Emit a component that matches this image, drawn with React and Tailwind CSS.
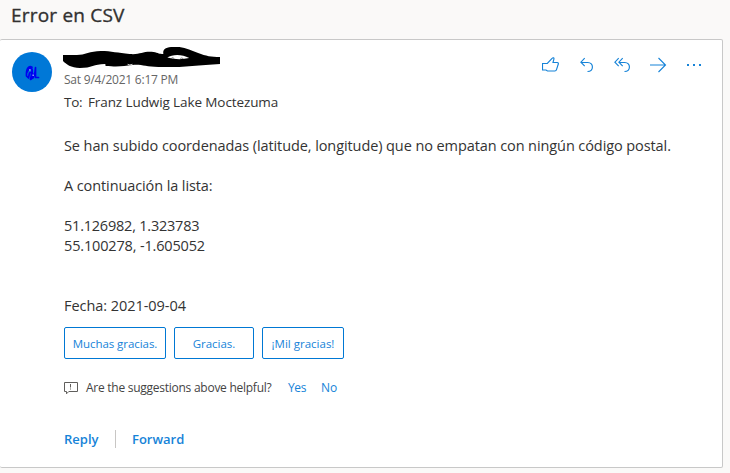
import React from "react";

const stroke = {
  fill: "none",
  stroke: "#1683d8",
  strokeWidth: 1,
};

function ThumbUp() {
  return (
    <svg className="h-4 w-[17px]" viewBox="0 0 17 16" {...stroke} strokeWidth="1.15" aria-label="Like">
      <path d="M.5 6.5H5.3L10.3 1.2C11 .3 12.3 .9 11.9 2.2L11 5.5H15.2Q16.6 5.5 16.3 7L14.5 12.7Q14.2 14 12.8 14H5.5L4 13H.5Z" />
    </svg>
  );
}

function ReplyIcon() {
  return (
    <svg className="h-4 w-3.5" viewBox="0 0 14 16" {...stroke} strokeWidth="1.15" aria-label="Reply">
      <path d="M4.7 1.2 .9 5.2 4.7 9.2M1 5.5H7.8C14 5.5 14 14.5 7.5 14.5" />
    </svg>
  );
}

function ReplyAllIcon() {
  return (
    <svg className="h-4 w-[17px]" viewBox="0 0 17 16" {...stroke} strokeWidth="1.15" aria-label="Reply all">
      <path d="M4.7 1.2 .9 5.2 4.7 9.2M8.7 1.2 4.9 5.2 8.7 9.2M5 5.5H10.8C17 5.5 17 14.5 10.5 14.5" />
    </svg>
  );
}

function ForwardIcon() {
  return (
    <svg className="h-4 w-[17px]" viewBox="0 0 17 16" {...stroke} strokeWidth="1.1" aria-label="Forward">
      <path d="M0 8H15.5M8.5 1 15.5 8 8.5 15" />
    </svg>
  );
}

function MoreIcon() {
  return (
    <svg className="h-4 w-4" viewBox="0 0 16 16" fill="#1683d8" aria-label="More">
      <path d="M1 7H3V9H1ZM7 7H9V9H7ZM13 7H15V9H13Z" />
    </svg>
  );
}

function FeedbackIcon() {
  return (
    <svg className="h-3.5 w-3.5" viewBox="0 0 14 14" fill="none" stroke="#605e5c">
      <path d="M.5 1.5H13.5V10.5H4.8L2.5 12.8V10.5H.5Z" />
      <path d="M6.5 3V6.5M6.5 7.5V8.5" />
    </svg>
  );
}

function Avatar() {
  return (
    <svg className="h-10 w-10 shrink-0" viewBox="0 0 40 40">
      <circle cx="20" cy="20" r="20" fill="#0078d7" />
      <g fill="none" stroke="#0000f0" strokeWidth="1.7" strokeLinecap="round" strokeLinejoin="round">
        <path d="M20 15.3C17 13.5 14 16 14.5 24L16.5 26 17.5 21 20 20 18.5 27.5 20.5 26 20 17M20.5 22 21 26 23 20 23.5 15.5 23.5 25.5 26.5 25.5" />
        <path d="M15 20 18 15 20 18" />
      </g>
      <path d="M17.2 17.2H18.5V18.4H17.2ZM20.5 22.5H21.8V24H20.5Z" fill="#9dbfff" />
    </svg>
  );
}

function Scribble() {
  return (
    <svg className="block h-[22px] w-[157px]" viewBox="0 0 158 22" preserveAspectRatio="none">
      <path
        fill="#000"
        fillRule="evenodd"
        d="M0 8H14C22 8 27 4 38 4C49 4 55 6 67 7C78 8 80 4 91 5C96 6 97 7 101 7C100 2 104 0 111 0C121-1 128 3 136 6C144 9 149 10 158 10V17C143 18 130 19 117 20H96C83 20 79 17 70 18C61 19 57 20 43 19C42 18 44 18 42 17C31 17 29 21 17 21C8 21 3 17 0 14ZM105 10.5C110 7 120 7 127 11Q116 13.5 105 10.5Z"
      />
      <path d="M109 11.3Q110 10 112 11.5M118 11.5Q119 10.5 121 11.5" fill="none" stroke="#333" strokeWidth=".6" />
      <path d="M65 17.3Q67 18.5 70 17.3" fill="none" stroke="#fff" strokeWidth=".8" />
    </svg>
  );
}

export default function App() {
  return (
    <main className="h-[473px] w-[730px] overflow-hidden bg-[#faf9f8] font-['Open_Sans','Noto_Sans',sans-serif] text-[#333]">
      <h1 className="h-[39px] pl-[11px] text-[19px] leading-[31px] font-medium whitespace-nowrap text-[#323130] [-webkit-text-stroke:0.35px_#323130]">
        <span className="tracking-[0.2px]">Error en CSV</span>
      </h1>
      <article className="flex h-[429px] w-[723px] rounded-[2px] border border-l-0 border-[#c8c8c8] bg-white pt-3 pl-3">
        <Avatar />
        <div className="ml-3 flex-1 whitespace-nowrap">
          <header className="flex justify-between">
            <div className="-mt-[5px] -ml-px">
              <Scribble />
              <div className="ml-px h-[22px] text-[12px] leading-[22px] text-[#666]">
                <span className="tracking-[-0.22px]">Sat 9/4/2021 6:17 PM</span>
              </div>
              <div className="ml-px flex h-6 gap-[6px] text-[13.5px] leading-[22px]">
                <span className="w-[18px] tracking-[-0.3px]">To:</span>
                <span className="tracking-[-0.1px]">Franz Ludwig Lake Moctezuma</span>
              </div>
            </div>
            <div className="mt-[5px] mr-[20px] flex h-4 items-center">
              <ThumbUp />
              <span className="ml-[21px] flex"><ReplyIcon /></span>
              <span className="ml-5 flex"><ReplyAllIcon /></span>
              <span className="ml-[19px] flex"><ForwardIcon /></span>
              <span className="ml-[19px] flex"><MoreIcon /></span>
            </div>
          </header>
          <section className="mt-[21px] text-[14.5px] leading-5">
            <p><span className="tracking-[-0.09px]">Se han subido coordenadas (latitude, longitude) que no empatan con ningún código postal.</span></p>
            <p className="mt-5"><span className="tracking-[-0.1px]">A continuación la lista:</span></p>
            <p className="mt-5"><span className="tracking-[-0.22px]">51.126982, 1.323783</span></p>
            <p><span className="tracking-[-0.16px]">55.100278, -1.605052</span></p>
            <p className="mt-10"><span className="tracking-[-0.05px]">Fecha: 2021-09-04</span></p>
          </section>
          <div className="mt-[11px] flex gap-2 text-[11.5px] text-[#1683d8]">
            <button className="h-8 w-[102px] rounded-[2px] border border-[#0078d4] pt-0.5 tracking-[-0.05px]">Muchas gracias.</button>
            <button className="h-8 w-20 rounded-[2px] border border-[#0078d4] pt-0.5 tracking-[-0.05px]">Gracias.</button>
            <button className="h-8 w-[82px] rounded-[2px] border border-[#0078d4] pt-0.5">¡Mil gracias!</button>
          </div>
          <div className="mt-[19px] flex h-5 items-center text-[12px] text-[#444]">
            <FeedbackIcon />
            <span className="ml-2 w-[202px]"><span className="tracking-[-0.26px]">Are the suggestions above helpful?</span></span>
            <button className="w-[33px] text-left tracking-[-0.4px] text-[#1683d8]">Yes</button>
            <button className="text-[#1683d8]">No</button>
          </div>
          <footer className="mt-[32px] flex h-[18px] items-center text-[13px] font-semibold text-[#1683d8]">
            <button className="w-[51px] pt-0.5 text-left">Reply</button>
            <span className="h-[18px] w-px bg-[#c8c6c4]" />
            <button className="ml-4 pt-0.5">Forward</button>
          </footer>
        </div>
      </article>
    </main>
  );
}
